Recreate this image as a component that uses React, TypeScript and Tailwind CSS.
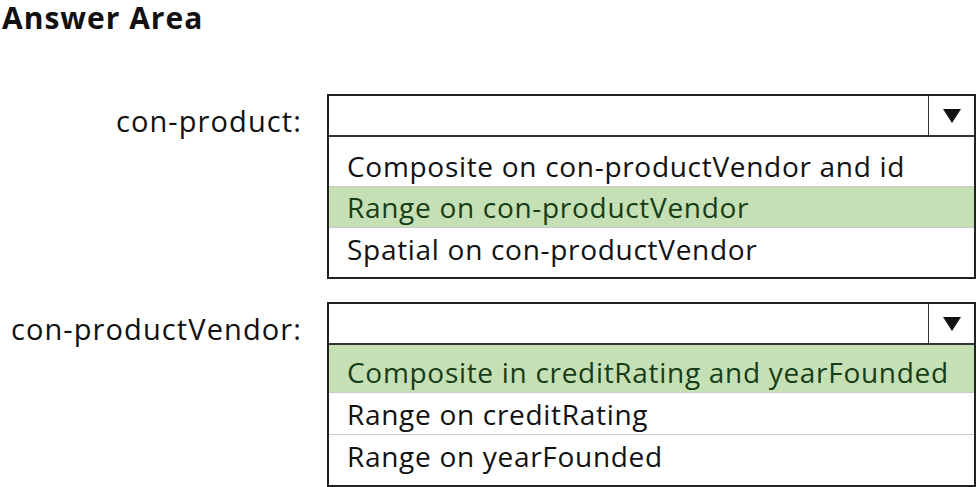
import React from "react"

type Option = { text: string; correct?: boolean; h: number }

type Field = {
  label: string
  padTop: number
  padBottom: number
  options: Option[]
}

const fields: Field[] = [
  {
    label: "con-product:",
    padTop: 7,
    padBottom: 8,
    options: [
      { text: "Composite on con-productVendor and id", h: 42 },
      { text: "Range on con-productVendor", correct: true, h: 41 },
      { text: "Spatial on con-productVendor", h: 42 },
    ],
  },
  {
    label: "con-productVendor:",
    padTop: 0,
    padBottom: 9,
    options: [
      { text: "Composite in creditRating and yearFounded", correct: true, h: 47 },
      { text: "Range on creditRating", h: 42 },
      { text: "Range on yearFounded", h: 42 },
    ],
  },
]

function Dropdown({ field }: { field: Field }) {
  return (
    <div className="w-[649px] border-2 border-[#222] bg-white">
      {/* Select header */}
      <div className="flex h-[41px] border-b-2 border-[#333]">
        <div className="flex-1" />
        <div className="flex w-[46px] items-center justify-center border-l border-[#333]">
          <svg width="20" height="16" viewBox="0 0 20 16">
            <path d="M1 1 H19 L10 15 Z" fill="#111" />
          </svg>
        </div>
      </div>

      {/* Options */}
      <div style={{ paddingTop: field.padTop, paddingBottom: field.padBottom }}>
        {field.options.map((opt, i) => (
          <div
            key={opt.text}
            style={{ height: opt.h }}
            className={
              "flex items-end pb-[6px] pl-[18px] text-[28px] leading-none tracking-[0.7px] whitespace-nowrap " +
              (opt.correct ? "bg-[#c6e0b5] text-[#173d17] " : "text-[#111] ") +
              (i > 0 ? "border-t border-[#c9c9c9]" : "")
            }
          >
            {opt.text}
          </div>
        ))}
      </div>
    </div>
  )
}

export default function App() {
  return (
    <div className="h-[487px] w-[976px] bg-white pt-[1px] font-['Open_Sans',sans-serif]">
      <h1 className="pl-[2px] text-[30px] font-bold leading-[34px] tracking-[1px] text-[#111]">
        Answer Area
      </h1>

      <div className="mt-[59px] flex flex-col gap-[23px]">
        {fields.map((field) => (
          <div key={field.label} className="flex gap-[25px]">
            <div className="w-[302px] pt-[10px] text-right text-[29px] leading-[34px] tracking-[1.1px] whitespace-nowrap text-[#111]">
              {field.label}
            </div>
            <Dropdown field={field} />
          </div>
        ))}
      </div>
    </div>
  )
}
